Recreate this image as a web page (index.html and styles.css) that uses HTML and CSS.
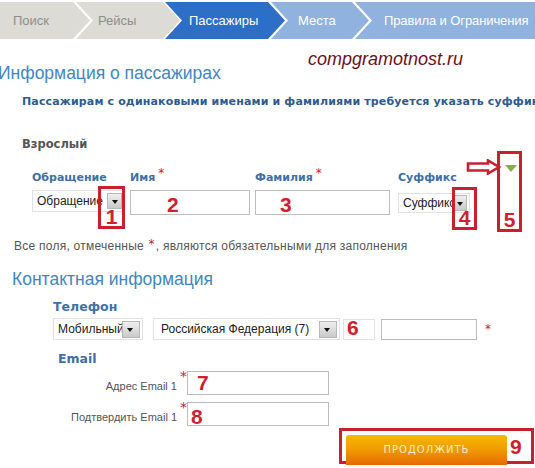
FILE: index.html
```html
<!DOCTYPE html>
<html lang="ru">
<head>
<meta charset="utf-8">
<title>Информация о пассажирах</title>
<link rel="stylesheet" href="styles.css">
</head>
<body>
<div class="page">
  <nav class="steps">
    <div class="step step-first done"><span>Поиск</span></div>
    <div class="step done s2"><span>Рейсы</span></div>
    <div class="step current s3"><span>Пассажиры</span></div>
    <div class="step next s4"><span>Места</span></div>
    <div class="step next step-last s5"><span>Правила и Ограничения</span></div>
  </nav>

  <div class="watermark">compgramotnost.ru</div>

  <h1 class="section-title">Информация о пассажирах</h1>
  <p class="notice">Пассажирам с одинаковыми именами и фамилиями требуется указать суффикс</p>
  <h2 class="pax-type">Взрослый</h2>

  <div class="name-grid">
    <div class="label c1">Обращение</div>
    <div class="label c2">Имя<sup class="req">*</sup></div>
    <div class="label c3">Фамилия<sup class="req">*</sup></div>
    <div class="label c4">Суффикс</div>

    <div class="select sel-title c1"><span class="sel-text">Обращение</span><span class="arrow"></span></div>
    <div class="input in-first c2"></div>
    <div class="input in-last c3"></div>
    <div class="select sel-suffix c4"><span class="sel-text">Суффикс</span><span class="arrow"></span></div>
  </div>

  <p class="required-note">Все поля, отмеченные <span class="req">*</span>, являются обязательными для заполнения</p>

  <h1 class="section-title contact-title">Контактная информация</h1>

  <div class="contact">
    <div class="label">Телефон</div>
    <div class="phone-row">
      <div class="select sel-type"><span class="sel-text">Мобильный</span><span class="arrow"></span></div>
      <div class="select sel-country"><span class="sel-text">Российская Федерация (7)</span><span class="arrow"></span></div>
      <div class="input in-code"></div>
      <div class="input in-phone"></div>
      <span class="req req-phone">*</span>
    </div>

    <div class="label email-label">Email</div>
    <div class="email-row">
      <span class="email-caption">Адрес Email 1</span><sup class="req">*</sup>
      <div class="input in-email"></div>
    </div>
    <div class="email-row">
      <span class="email-caption">Подтвердить Email 1</span><sup class="req">*</sup>
      <div class="input in-email"></div>
    </div>
  </div>

  <div class="actions">
    <div class="mark-box mark-btn">
      <button class="continue" type="button">ПРОДОЛЖИТЬ</button>
      <span class="num">9</span>
    </div>
  </div>

  <!-- annotation overlay -->
  <div class="mark-box m1"><span class="num">1</span></div>
  <span class="num n2">2</span>
  <span class="num n3">3</span>
  <div class="mark-box m4"><span class="num">4</span></div>
  <div class="mark-box m5"><span class="num">5</span></div>
  <svg class="pointer" width="38" height="16" viewBox="0 0 38 16">
    <path d="M2 4.5 H22 V1.5 L33 8 L22 14.5 V11.5 H2 Z" fill="#fff" stroke="#c8202e" stroke-width="2.6" stroke-linejoin="miter"/>
  </svg>
  <svg class="green-tri" width="12" height="8" viewBox="0 0 12 8">
    <path d="M0 0 H12 L6 7 Z" fill="#8aab45"/>
  </svg>
  <span class="num n6">6</span>
  <span class="num n7">7</span>
  <span class="num n8">8</span>
</div>
</body>
</html>
```

FILE: styles.css
```css
html, body {
  margin: 0;
  padding: 0;
  background: #fff;
}

.page {
  position: relative;
  width: 535px;
  height: 468px;
  overflow: hidden;
  font-family: "Liberation Sans", Arial, sans-serif;
  font-size: 12px;
  color: #555;
}

/* ---------- steps ---------- */
.steps {
  display: flex;
  margin-top: 2px;
  height: 37px;
}

.step {
  flex: none;
  height: 37px;
  display: flex;
  align-items: center;
  font-size: 13px;
  clip-path: polygon(0 0, calc(100% - 17px) 0, 100% 50%, calc(100% - 17px) 100%, 0 100%, 17px 50%);
}

.step.done { background: #dcdbd5; color: #8e8e8c; }
.step.current { background: #2d6ec6; color: #fff; }
.step.next { background: #8fb2de; color: #fff; }

.step-first {
  width: 90px;
  padding-left: 13px;
  box-sizing: border-box;
  clip-path: polygon(0 0, calc(100% - 17px) 0, 100% 50%, calc(100% - 17px) 100%, 0 100%);
}
.s2 { width: 104px; margin-left: -14px; padding-left: 22px; box-sizing: border-box; }
.s3 { width: 120px; margin-left: -15px; padding-left: 24px; box-sizing: border-box; }
.s4 { width: 98px; margin-left: -14px; padding-left: 27px; box-sizing: border-box; }
.s5 {
  width: 200px;
  margin-left: -14px;
  padding-left: 29px;
  box-sizing: border-box;
  letter-spacing: -0.1px;
  clip-path: polygon(0 0, 100% 0, 100% 100%, 0 100%, 17px 50%);
}

/* ---------- watermark ---------- */
.watermark {
  position: absolute;
  left: 308px;
  top: 49px;
  font-family: "Liberation Sans", Arial, sans-serif;
  font-style: italic;
  font-size: 18px;
  color: #6e1020;
}

/* ---------- headings ---------- */
.section-title {
  margin: 24px 0 0 -2px;
  font-size: 17.5px;
  line-height: 20px;
  font-weight: normal;
  color: #3f86c4;
  font-family: "Liberation Sans", Arial, sans-serif;
}

.notice {
  margin: 12px 0 0 22px;
  font-family: "DejaVu Sans", Verdana, sans-serif;
  font-size: 11px;
  font-weight: bold;
  line-height: 14px;
  letter-spacing: 0.15px;
  color: #2c5b92;
  white-space: nowrap;
}

.pax-type {
  margin: 27px 0 0 22px;
  font-family: "DejaVu Sans", Verdana, sans-serif;
  font-size: 11.5px;
  line-height: 16px;
  color: #555;
}

/* ---------- name grid ---------- */
.name-grid {
  display: grid;
  grid-template-columns: 93px 120px 135px 75px;
  column-gap: 5px;
  row-gap: 5px;
  margin: 19px 0 0 32px;
}
.name-grid .c4 { margin-left: 3px; }

.label {
  font-family: "DejaVu Sans", Verdana, sans-serif;
  font-size: 11px;
  font-weight: bold;
  line-height: 14px;
  color: #3e6fa8;
  white-space: nowrap;
}

.req {
  color: #c0262c;
  font-family: "DejaVu Sans", sans-serif;
  font-weight: normal;
  font-size: 12px;
  margin-left: 3px;
}
sup.req {
  vertical-align: top;
  line-height: 10px;
  position: relative;
  top: -3px;
}

.select {
  height: 22px;
  border: 1px solid #e2e2e2;
  box-sizing: border-box;
  display: flex;
  align-items: center;
  overflow: hidden;
  background: #fff;
}
.sel-text {
  flex: 1 1 auto;
  min-width: 0;
  overflow: hidden;
  white-space: nowrap;
  padding-left: 4px;
  color: #222;
  font-size: 12px;
}
.arrow {
  flex: none;
  width: 15px;
  height: 16px;
  margin-right: 2px;
  box-sizing: border-box;
  border: 1px solid #b8b8b8;
  background: linear-gradient(#f0f0f0, #c9c9c9);
  position: relative;
}
.arrow::after {
  content: "";
  position: absolute;
  left: 4px;
  top: 6px;
  border-left: 3.5px solid transparent;
  border-right: 3.5px solid transparent;
  border-top: 4px solid #111;
}

.input {
  height: 25px;
  box-sizing: border-box;
  border: 1px solid #bdbdbd;
  background: #fff;
}

.sel-suffix { height: 20px; margin-top: 3px; }

/* ---------- note ---------- */
.required-note {
  margin: 22px 0 0 14px;
  font-size: 12px;
  line-height: 14px;
  color: #555;
  letter-spacing: 0.25px;
}
.required-note .req { margin: 0 1px; vertical-align: 2px; }

.contact-title {
  margin-top: 16px;
  margin-left: 12px;
}

/* ---------- contact ---------- */
.contact {
  margin: 10px 0 0 53px;
}
.contact .label { font-size: 12.5px; line-height: 15px; }

.phone-row {
  display: flex;
  align-items: center;
  margin-top: 4px;
}
.sel-type { width: 90px; }
.sel-country { width: 187px; margin-left: 10px; }
.sel-country .sel-text { padding-left: 7px; }
.sel-country .arrow { height: 17px; margin-right: 2px; width: 18px; }
.sel-type .arrow { width: 18px; height: 17px; }
.in-code {
  width: 32px;
  height: 21px;
  margin-left: 3px;
  border-color: #e3e3e3;
}
.in-phone {
  width: 96px;
  height: 21px;
  margin-left: 6px;
}
.req-phone { margin-left: 8px; }

.contact .email-label { margin: 11px 0 0 5px; }

.email-row {
  display: flex;
  align-items: flex-start;
  margin-top: 5px;
}
.email-row + .email-row { margin-top: 7px; }
.email-caption {
  width: 124px;
  text-align: right;
  font-size: 11px;
  line-height: 14px;
  padding-top: 8px;
  color: #555;
}
.email-row sup.req {
  top: 0;
  margin-left: 3px;
  width: 7px;
  font-size: 14px;
}
.in-email {
  width: 142px;
  height: 24px;
}

/* ---------- actions ---------- */
.actions {
  display: flex;
  justify-content: flex-end;
  margin-top: 2px;
  padding-right: 1px;
}

.mark-box {
  border: 3px solid #c8202e;
  box-sizing: border-box;
}
.mark-btn {
  width: 195px;
  height: 36px;
  display: flex;
  align-items: flex-start;
  padding: 4px 0 0 4px;
}
.continue {
  width: 161px;
  height: 30px;
  border: 0;
  border-radius: 3px 3px 0 0;
  background: linear-gradient(#f5b900, #f19a00 50%, #e46a00);
  color: #f6eed0;
  font-family: "DejaVu Sans", Verdana, sans-serif;
  font-size: 10px;
  letter-spacing: 1px;
  padding: 0;
  padding-bottom: 2px;
}
.mark-btn .num { margin: 3px 0 0 3px; position: static; }

/* ---------- annotations ---------- */
.num {
  font-family: "Liberation Sans", Arial, sans-serif;
  font-weight: bold;
  font-size: 21px;
  line-height: 20px;
  color: #d0202f;
}
.page > .num { position: absolute; }
.page > .mark-box { position: absolute; display: flex; justify-content: center; align-items: flex-end; }
.mark-box .num { line-height: 18px; }

.m1 { left: 98px; top: 186px; width: 27px; height: 43px; }
.m4 { left: 452px; top: 187px; width: 25px; height: 43px; }
.m5 { left: 497px; top: 151px; width: 25px; height: 81px; }
.n2 { left: 167px; top: 195px; }
.n3 { left: 280px; top: 195px; }
.n6 { left: 347px; top: 318px; }
.n7 { left: 197px; top: 373px; }
.n8 { left: 191px; top: 407px; }

.pointer { position: absolute; left: 466px; top: 159px; }
.green-tri { position: absolute; left: 505px; top: 165px; }
```
